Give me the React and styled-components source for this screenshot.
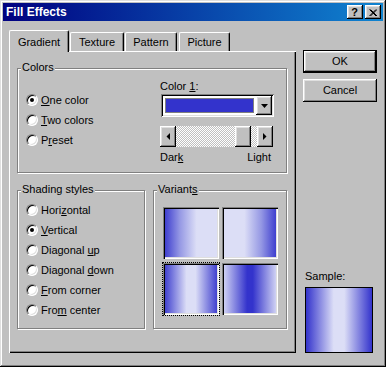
import React from 'react';
import styled, { createGlobalStyle, css } from 'styled-components';

const BLUE = '#3333cc';
const LIGHT = '#dcdef6';

const GlobalStyle = createGlobalStyle`
  html, body {
    margin: 0;
    padding: 0;
    background: #c0c0c0;
  }
  body {
    font-family: "Liberation Sans", Arial, sans-serif;
    font-size: 11px;
    color: #000;
  }
`;

const raised = css`
  background: #c0c0c0;
  box-shadow: inset -1px -1px #000, inset 1px 1px #fff, inset -2px -2px #808080,
    inset 2px 2px #dfdfdf;
`;

const sunken = css`
  box-shadow: inset 1px 1px #808080, inset -1px -1px #fff, inset 2px 2px #000,
    inset -2px -2px #dfdfdf;
`;

const Window = styled.div`
  box-sizing: border-box;
  width: 386px;
  height: 367px;
  padding: 3px;
  background: #c0c0c0;
  box-shadow: inset -1px -1px #000, inset 1px 1px #dfdfdf, inset -2px -2px #808080,
    inset 2px 2px #fff;
  display: flex;
  flex-direction: column;
`;

const TitleBar = styled.div`
  height: 18px;
  flex: none;
  display: flex;
  align-items: center;
  padding: 0 2px 0 3px;
  background: linear-gradient(to right, #000080, #1084d0);
`;

const Title = styled.span`
  flex: 1;
  color: #fff;
  font-weight: bold;
  font-size: 12px;
  line-height: 14px;
`;

const TitleButton = styled.div`
  box-sizing: border-box;
  width: 16px;
  height: 14px;
  margin-left: ${(p) => p.$gap || 0}px;
  ${raised};
  display: flex;
  align-items: center;
  justify-content: center;
  font-weight: bold;
  font-size: 11px;
  line-height: 12px;
  padding-right: 1px;
`;

const Body = styled.div`
  display: flex;
  gap: 7px;
  padding: 9px 0 0 6px;
`;

const LeftCol = styled.div`
  width: 287px;
  display: flex;
  flex-direction: column;
`;

const TabRow = styled.div`
  height: 21px;
  display: flex;
  align-items: flex-end;
  position: relative;
  z-index: 1;
`;

const Tab = styled.div`
  box-sizing: border-box;
  width: ${(p) => p.$w}px;
  margin-left: ${(p) => p.$ml || 0}px;
  height: ${(p) => (p.$active ? 22 : 19)}px;
  margin-bottom: ${(p) => (p.$active ? -1 : 0)}px;
  padding-top: ${(p) => (p.$active ? 5 : 3)}px;
  background: #c0c0c0;
  border-top: 1px solid #fff;
  border-left: 1px solid #fff;
  border-right: 1px solid #000;
  border-radius: 2px 2px 0 0;
  box-shadow: inset -1px 0 #808080;
  text-align: center;
  line-height: 13px;
`;

const Panel = styled.div`
  box-sizing: border-box;
  height: 302px;
  padding: 17px 9px 0 8px;
  background: #c0c0c0;
  box-shadow: inset 1px 1px #fff, inset -1px -1px #000, inset -2px -2px #808080;
  display: flex;
  flex-direction: column;
  gap: 17px;
`;

const GroupRow = styled.div`
  display: flex;
  gap: 8px;
`;

const Group = styled.div`
  position: relative;
  box-sizing: border-box;
  width: ${(p) => p.$w}px;
  height: ${(p) => p.$h}px;
  border: 1px solid #808080;
  box-shadow: inset 1px 1px #fff, 1px 1px #fff;
  display: flex;
`;

const Legend = styled.span`
  position: absolute;
  top: -8px;
  left: 3px;
  padding: 0 1px;
  background: #c0c0c0;
  line-height: 13px;
`;

const RadioList = styled.div`
  box-sizing: border-box;
  width: ${(p) => (p.$w ? `${p.$w}px` : 'auto')};
  padding: ${(p) => p.$top}px 0 0 8px;
  display: flex;
  flex-direction: column;
`;

const RadioRow = styled.div`
  height: 20px;
  display: flex;
  align-items: center;
  gap: 3px;
`;

const RadioCircle = styled.span`
  position: relative;
  box-sizing: border-box;
  flex: none;
  width: 12px;
  height: 12px;
  border-radius: 50%;
  background: #fff;
  border: 1px solid;
  border-color: #808080 #fff #fff #808080;
  box-shadow: inset 1px 1px #000, inset -1px -1px #dfdfdf;
  ${(p) =>
    p.$checked &&
    css`
      &::after {
        content: '';
        position: absolute;
        left: 3px;
        top: 3px;
        width: 4px;
        height: 4px;
        border-radius: 50%;
        background: #000;
      }
    `}
`;

const Label = styled.span`
  line-height: 13px;
  white-space: nowrap;
`;

const Key = styled.span`
  text-decoration: underline;
`;

const ColorControls = styled.div`
  width: 113px;
  padding-top: 11px;
  display: flex;
  flex-direction: column;
`;

const Combo = styled.div`
  box-sizing: border-box;
  width: 113px;
  height: 23px;
  margin: 1px 0 0 1px;
  padding: 2px;
  background: #fff;
  ${sunken};
  display: flex;
`;

const Swatch = styled.div`
  flex: 1;
  margin: 2px;
  background: ${(p) => p.$color};
  border: 1px solid #808080;
`;

const DropButton = styled.div`
  box-sizing: border-box;
  width: 16px;
  ${raised};
  display: flex;
  align-items: center;
  justify-content: center;
`;

const Slider = styled.div`
  width: 113px;
  height: 21px;
  margin-top: 9px;
  display: flex;
`;

const ArrowButton = styled.div`
  box-sizing: border-box;
  width: 16px;
  ${raised};
  display: flex;
  align-items: center;
  justify-content: center;
`;

const Track = styled.div`
  flex: 1;
  display: flex;
  background: repeating-conic-gradient(#c0c0c0 0 25%, #fff 0 50%) 0 0 / 2px 2px;
`;

const Thumb = styled.div`
  box-sizing: border-box;
  width: 16px;
  margin-left: ${(p) => p.$offset}px;
  ${raised};
`;

const Ends = styled.div`
  display: flex;
  justify-content: space-between;
  margin-top: 4px;
  padding-right: 2px;
  line-height: 13px;
`;

const TileGrid = styled.div`
  padding: 16px 0 0 9px;
  display: grid;
  grid-template-columns: 56px 56px;
  grid-auto-rows: 52px;
  column-gap: 3px;
  row-gap: 4px;
`;

const shades = {
  right: `linear-gradient(to right, ${BLUE}, #9598e4 30%, ${LIGHT} 60%, ${LIGHT})`,
  left: `linear-gradient(to left, ${BLUE}, #9598e4 30%, ${LIGHT} 60%, ${LIGHT})`,
  edges: `linear-gradient(to right, ${BLUE}, ${LIGHT} 42%, ${LIGHT} 58%, ${BLUE})`,
  middle: `linear-gradient(to right, ${LIGHT}, ${BLUE} 45%, ${BLUE} 55%, ${LIGHT})`,
};

const Tile = styled.div`
  box-sizing: border-box;
  background: ${(p) => shades[p.$shade]};
  box-shadow: inset 1px 1px #808080, inset 2px 2px #000, inset -1px -1px #fff,
    inset -2px -2px #dfdfdf;
  outline: ${(p) => (p.$focused ? '1px dotted #000' : 'none')};
`;

const Side = styled.div`
  width: 74px;
  height: 323px;
  padding-top: 20px;
  box-sizing: border-box;
  display: flex;
  flex-direction: column;
`;

const Button = styled.div`
  box-sizing: border-box;
  height: 23px;
  margin-top: ${(p) => p.$mt || 0}px;
  ${raised};
  ${(p) =>
    p.$default &&
    css`
      box-shadow: inset 0 0 0 1px #000, inset -2px -2px #000, inset 2px 2px #fff,
        inset -3px -3px #808080, inset 3px 3px #dfdfdf;
    `}
  display: flex;
  align-items: center;
  justify-content: center;
  line-height: 13px;
`;

const SampleLabel = styled.div`
  margin-top: auto;
  margin-left: 2px;
  line-height: 13px;
`;

const SampleBox = styled.div`
  box-sizing: border-box;
  width: 68px;
  height: 66px;
  margin: 4px 0 0 2px;
  border: 1px solid #000;
  background: ${shades.edges};
`;

const Triangle = ({ dir }) => {
  const points = {
    left: '4,0 4,7 0.5,3.5',
    right: '0,0 0,7 3.5,3.5',
    down: '0,0 7,0 3.5,4',
  }[dir];
  const size = dir === 'down' ? [7, 4] : [4, 7];
  return (
    <svg width={size[0]} height={size[1]} viewBox={`0 0 ${size[0]} ${size[1]}`}>
      <polygon points={points} fill="#000" />
    </svg>
  );
};

const CloseGlyph = () => (
  <svg width="8" height="7" viewBox="0 0 8 7">
    <path d="M0.5 0.5 L7 7 M1.5 0.5 L8 7 M7 0.5 L0.5 7 M8 0.5 L1.5 7" stroke="#000" strokeWidth="1" />
  </svg>
);

const Radio = ({ checked, children }) => (
  <RadioRow>
    <RadioCircle $checked={checked} />
    <Label>{children}</Label>
  </RadioRow>
);

export default function App() {
  return (
    <>
      <GlobalStyle />
      <Window>
        <TitleBar>
          <Title>Fill Effects</Title>
          <TitleButton>?</TitleButton>
          <TitleButton $gap={2}>
            <CloseGlyph />
          </TitleButton>
        </TitleBar>
        <Body>
          <LeftCol>
            <TabRow>
              <Tab $w={60} $active>
                Gradient
              </Tab>
              <Tab $w={54} $ml={1}>
                Texture
              </Tab>
              <Tab $w={52} $ml={1}>
                Pattern
              </Tab>
              <Tab $w={51} $ml={2}>
                Picture
              </Tab>
            </TabRow>
            <Panel>
              <Group $w={270} $h={105}>
                <Legend>Colors</Legend>
                <RadioList $w={142} $top={21}>
                  <Radio checked>
                    <Key>O</Key>ne color
                  </Radio>
                  <Radio>
                    <Key>T</Key>wo colors
                  </Radio>
                  <Radio>
                    P<Key>r</Key>eset
                  </Radio>
                </RadioList>
                <ColorControls>
                  <Label>
                    Color <Key>1</Key>:
                  </Label>
                  <Combo>
                    <Swatch $color={BLUE} />
                    <DropButton>
                      <Triangle dir="down" />
                    </DropButton>
                  </Combo>
                  <Slider>
                    <ArrowButton>
                      <Triangle dir="left" />
                    </ArrowButton>
                    <Track>
                      <Thumb $offset={59} />
                    </Track>
                    <ArrowButton>
                      <Triangle dir="right" />
                    </ArrowButton>
                  </Slider>
                  <Ends>
                    <span>
                      Dar<Key>k</Key>
                    </span>
                    <span>Light</span>
                  </Ends>
                </ColorControls>
              </Group>
              <GroupRow>
                <Group $w={128} $h={139}>
                  <Legend>Shading styles</Legend>
                  <RadioList $top={9}>
                    <Radio>
                      Hori<Key>z</Key>ontal
                    </Radio>
                    <Radio checked>
                      <Key>V</Key>ertical
                    </Radio>
                    <Radio>
                      Diagonal <Key>u</Key>p
                    </Radio>
                    <Radio>
                      Diagonal <Key>d</Key>own
                    </Radio>
                    <Radio>
                      <Key>F</Key>rom corner
                    </Radio>
                    <Radio>
                      Fro<Key>m</Key> center
                    </Radio>
                  </RadioList>
                </Group>
                <Group $w={134} $h={139}>
                  <Legend>
                    Variant<Key>s</Key>
                  </Legend>
                  <TileGrid>
                    <Tile $shade="right" />
                    <Tile $shade="left" />
                    <Tile $shade="edges" $focused />
                    <Tile $shade="middle" />
                  </TileGrid>
                </Group>
              </GroupRow>
            </Panel>
          </LeftCol>
          <Side>
            <Button $default>OK</Button>
            <Button $mt={6}>Cancel</Button>
            <SampleLabel>Sample:</SampleLabel>
            <SampleBox />
          </Side>
        </Body>
      </Window>
    </>
  );
}
